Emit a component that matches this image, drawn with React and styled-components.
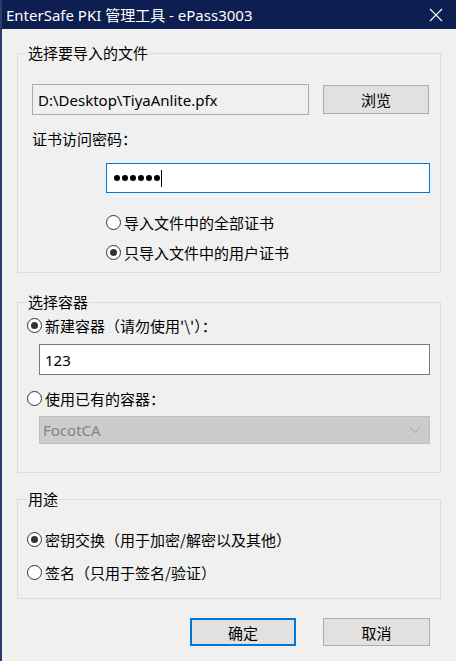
import React from "react";
import styled, { createGlobalStyle, css } from "styled-components";

const Global = createGlobalStyle`
  html, body {
    margin: 0;
    padding: 0;
    background: #f0f0f0;
  }
  body {
    font-family: "Noto Sans", "Noto Sans CJK SC", sans-serif;
    font-size: 15px;
    color: #000;
  }
`;

const Window = styled.div`
  width: 456px;
  height: 661px;
  box-sizing: border-box;
  background: #f0f0f0;
  border-left: 2px solid #2b3a6b;
  display: flex;
  flex-direction: column;
  overflow: hidden;
`;

const TitleBar = styled.div`
  height: 29px;
  margin-left: -2px;
  background: #0d1e50;
  color: #fff;
  display: flex;
  align-items: center;
  justify-content: space-between;
  padding: 0 13px 0 6px;
  font-size: 15px;
  flex-shrink: 0;
`;

const Body = styled.div`
  padding: 14px 15px 0 15px;
  display: flex;
  flex-direction: column;
`;

const Group = styled.fieldset`
  margin: 0;
  margin-top: ${(p) => p.top || 0}px;
  border: 1px solid #dcdcdc;
  padding: 0 10px ${(p) => p.bottom || 10}px 9px;
  min-width: 0;
`;

const Legend = styled.legend`
  padding: 0 1px;
  margin: 0;
  line-height: 20px;
  font-family: "Noto Sans CJK SC", sans-serif;
  font-size: 15px;
`;

const Row = styled.div`
  display: flex;
  align-items: center;
  margin-top: ${(p) => p.top || 0}px;
  margin-left: ${(p) => p.indent || 0}px;
  gap: ${(p) => p.gap || 0}px;
`;

const TextBox = styled.div`
  box-sizing: border-box;
  height: ${(p) => p.h || 31}px;
  flex: ${(p) => (p.w ? "none" : 1)};
  width: ${(p) => (p.w ? `${p.w}px` : "auto")};
  border: 1px solid #7a7a7a;
  background: #fff;
  display: flex;
  align-items: center;
  padding-left: 5px;
  font-size: 15px;
  ${(p) =>
    p.readonly &&
    css`
      background: #f0f0f0;
      border-color: #adadad;
    `}
  ${(p) =>
    p.focused &&
    css`
      border-color: #0078d7;
      padding-left: 7px;
    `}
`;

const Button = styled.div`
  box-sizing: border-box;
  width: ${(p) => p.w || 106}px;
  height: ${(p) => p.h || 29}px;
  background: #e1e1e1;
  border: 1px solid #adadad;
  display: flex;
  align-items: center;
  justify-content: center;
  font-family: "Noto Sans CJK SC", sans-serif;
  font-size: 15px;
  ${(p) =>
    p.primary &&
    css`
      border: 2px solid #0078d7;
    `}
`;

const Label = styled.div`
  line-height: 20px;
  margin-top: ${(p) => p.top || 0}px;
  margin-left: ${(p) => p.indent || 0}px;
  font-family: "Noto Sans CJK SC", sans-serif;
`;

const RadioRow = styled.label`
  display: flex;
  align-items: center;
  height: 22px;
  margin-top: ${(p) => p.top || 0}px;
  margin-left: ${(p) => p.indent || 0}px;
  font-family: "Noto Sans CJK SC", sans-serif;
  font-size: 15px;
  gap: 3px;
`;

const RadioDot = styled.span`
  position: relative;
  box-sizing: border-box;
  width: 15px;
  height: 15px;
  border-radius: 50%;
  border: 1px solid #333;
  background: #fff;
  flex-shrink: 0;
  ${(p) =>
    p.checked &&
    css`
      &::after {
        content: "";
        position: absolute;
        left: 3px;
        top: 3px;
        width: 7px;
        height: 7px;
        border-radius: 50%;
        background: #333;
      }
    `}
`;

const Dots = styled.span`
  display: flex;
  gap: 2px;
`;

const Dot = styled.span`
  width: 6px;
  height: 6px;
  border-radius: 50%;
  background: #000;
`;

const Caret = styled.span`
  display: inline-block;
  width: 1px;
  height: 17px;
  background: #000;
  margin-left: 1px;
`;

const Combo = styled.div`
  box-sizing: border-box;
  height: 28px;
  flex: 1;
  background: #cccccc;
  border: 1px solid #bfbfbf;
  color: #838383;
  display: flex;
  align-items: center;
  justify-content: space-between;
  padding: 0 8px 0 3px;
`;

const Footer = styled.div`
  display: flex;
  justify-content: flex-end;
  gap: 27px;
  margin-top: 19px;
  padding-right: 11px;
`;

const Radio = ({ checked, children, top, indent }) => (
  <RadioRow top={top} indent={indent}>
    <RadioDot checked={checked} />
    <span>{children}</span>
  </RadioRow>
);

export default function App() {
  return (
    <>
      <Global />
      <Window>
        <TitleBar>
          <span>EnterSafe PKI 管理工具 - ePass3003</span>
          <svg width="14" height="14" viewBox="0 0 14 14">
            <path d="M1 1 L13 13 M13 1 L1 13" stroke="#fff" strokeWidth="1.1" />
          </svg>
        </TitleBar>
        <Body>
          <Group bottom={9}>
            <Legend>选择要导入的文件</Legend>
            <Row top={21} indent={5} gap={14}>
              <TextBox readonly w={277}>D:\Desktop\TiyaAnlite.pfx</TextBox>
              <Button>浏览</Button>
            </Row>
            <Label top={14} indent={5}>证书访问密码：</Label>
            <Row top={14} indent={79}>
              <TextBox focused h={30}>
                <Dots>
                  {[0, 1, 2, 3, 4, 5].map((i) => (
                    <Dot key={i} />
                  ))}
                </Dots>
                <Caret />
              </TextBox>
            </Row>
            <Radio top={18} indent={79}>导入文件中的全部证书</Radio>
            <Radio top={8} indent={79} checked>只导入文件中的用户证书</Radio>
          </Group>

          <Group top={19} bottom={28}>
            <Legend>选择容器</Legend>
            <Radio top={2} checked>新建容器（请勿使用'\'）：</Radio>
            <Row top={8} indent={12}>
              <TextBox>123</TextBox>
            </Row>
            <Radio top={12}>使用已有的容器：</Radio>
            <Row top={7} indent={12}>
              <Combo>
                <span>FocotCA</span>
                <svg width="12" height="8" viewBox="0 0 12 8">
                  <path d="M1 1.5 L6 6.5 L11 1.5" fill="none" stroke="#a0a0a0" strokeWidth="1" />
                </svg>
              </Combo>
            </Row>
          </Group>

          <Group top={16} bottom={15}>
            <Legend>用途</Legend>
            <Radio top={19} checked>密钥交换（用于加密/解密以及其他）</Radio>
            <Radio top={11}>签名（只用于签名/验证）</Radio>
          </Group>

          <Footer>
            <Button primary h={28}>确定</Button>
            <Button w={107} h={28}>取消</Button>
          </Footer>
        </Body>
      </Window>
    </>
  );
}
